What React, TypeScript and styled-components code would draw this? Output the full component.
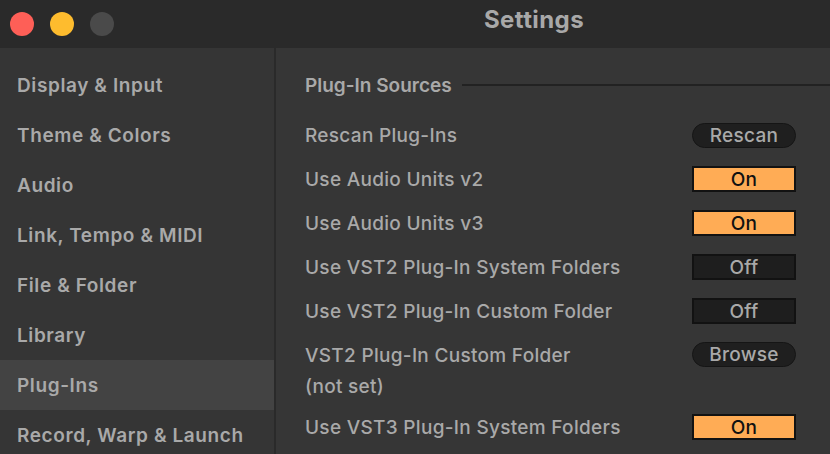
import React from "react";
import styled, { createGlobalStyle } from "styled-components";

const Global = createGlobalStyle`
  html, body { margin: 0; padding: 0; background: #363636; overflow: hidden; }
  * { box-sizing: border-box; }
`;

const Window = styled.div`
  width: 830px;
  height: 454px;
  display: flex;
  flex-direction: column;
  background: #363636;
  font-family: Inter, "Open Sans", sans-serif;
  color: #a9a9a9;
  overflow: hidden;
`;

const TitleBar = styled.div`
  height: 48px;
  flex: none;
  display: flex;
  align-items: center;
  padding-left: 10px;
  background: #2a2a2a;
`;

const Lights = styled.div`
  display: flex;
  gap: 16px;
`;

const Light = styled.span<{ $color: string }>`
  width: 24px;
  height: 24px;
  border-radius: 50%;
  background: ${(p) => p.$color};
`;

const Title = styled.div`
  margin-left: 370px;
  font-size: 24px;
  font-weight: 700;
  color: #a8a8a8;
  letter-spacing: 0.4px;
  margin-top: -9px;
`;

const Body = styled.div`
  flex: 1;
  display: flex;
  min-height: 0;
`;

const Sidebar = styled.div`
  width: 276px;
  flex: none;
  padding-top: 12px;
  border-right: 2px solid #2a2a2a;
  background: #353535;
  display: flex;
  flex-direction: column;
`;

const NavItem = styled.div<{ $active?: boolean }>`
  height: 50px;
  flex: none;
  display: flex;
  align-items: center;
  padding-left: 17px;
  font-size: 19px;
  font-weight: 600;
  letter-spacing: 0.6px;
  white-space: nowrap;
  background: ${(p) => (p.$active ? "#434343" : "transparent")};
`;

const Content = styled.div`
  flex: 1;
  padding: 12px 34px 0 29px;
  display: flex;
  flex-direction: column;
`;

const SectionHeader = styled.div`
  height: 50px;
  margin-bottom: 3px;
  flex: none;
  display: flex;
  align-items: center;
  gap: 10px;
  font-size: 19px;
  font-weight: 600;
  margin-right: -34px;
`;

const Rule = styled.div`
  flex: 1;
  height: 2px;
  background: #222222;
`;

const Row = styled.div<{ $tall?: boolean }>`
  height: ${(p) => (p.$tall ? 72 : 44)}px;
  flex: none;
  display: flex;
  justify-content: space-between;
  align-items: ${(p) => (p.$tall ? "flex-start" : "center")};
  padding-top: ${(p) => (p.$tall ? 9 : 0)}px;
`;

const Label = styled.div`
  display: flex;
  flex-direction: column;
  font-size: 19px;
  font-weight: 500;
  letter-spacing: 0.3px;
  line-height: 26px;
  padding-top: 1px;
`;

const SubLabel = styled.span`
  margin-top: 5px;
`;

const Toggle = styled.div<{ $on: boolean }>`
  width: 104px;
  height: 26px;
  display: flex;
  align-items: center;
  justify-content: center;
  border: 2px solid #121212;
  background: ${(p) => (p.$on ? "#ffac55" : "#1e1e1e")};
  color: ${(p) => (p.$on ? "#111111" : "#a9a9a9")};
  font-size: 19px;
  font-weight: 500;
  letter-spacing: 0.3px;
`;

const Pill = styled.div`
  width: 104px;
  height: 25px;
  display: flex;
  align-items: center;
  justify-content: center;
  border-radius: 13px;
  border: 1px solid #151515;
  background: #1f1f1f;
  color: #a9a9a9;
  font-size: 19px;
  font-weight: 500;
  letter-spacing: 0.3px;
`;

const nav = [
  "Display & Input",
  "Theme & Colors",
  "Audio",
  "Link, Tempo & MIDI",
  "File & Folder",
  "Library",
  "Plug-Ins",
  "Record, Warp & Launch",
];

type RowDef =
  | { label: string; sub?: string; kind: "pill"; text: string }
  | { label: string; sub?: string; kind: "toggle"; on: boolean };

const rows: RowDef[] = [
  { label: "Rescan Plug-Ins", kind: "pill", text: "Rescan" },
  { label: "Use Audio Units v2", kind: "toggle", on: true },
  { label: "Use Audio Units v3", kind: "toggle", on: true },
  { label: "Use VST2 Plug-In System Folders", kind: "toggle", on: false },
  { label: "Use VST2 Plug-In Custom Folder", kind: "toggle", on: false },
  { label: "VST2 Plug-In Custom Folder", sub: "(not set)", kind: "pill", text: "Browse" },
  { label: "Use VST3 Plug-In System Folders", kind: "toggle", on: true },
];

export default function App() {
  return (
    <Window>
      <Global />
      <TitleBar>
        <Lights>
          <Light $color="#fe5f57" />
          <Light $color="#febc2e" />
          <Light $color="#4a4a4a" />
        </Lights>
        <Title>Settings</Title>
      </TitleBar>
      <Body>
        <Sidebar>
          {nav.map((n) => (
            <NavItem key={n} $active={n === "Plug-Ins"}>
              {n}
            </NavItem>
          ))}
        </Sidebar>
        <Content>
          <SectionHeader>
            Plug-In Sources
            <Rule />
          </SectionHeader>
          {rows.map((r) => (
            <Row key={r.label} $tall={!!r.sub}>
              <Label>
                {r.label}
                {r.sub && <SubLabel>{r.sub}</SubLabel>}
              </Label>
              {r.kind === "pill" ? (
                <Pill>{r.text}</Pill>
              ) : (
                <Toggle $on={r.on}>{r.on ? "On" : "Off"}</Toggle>
              )}
            </Row>
          ))}
        </Content>
      </Body>
    </Window>
  );
}
